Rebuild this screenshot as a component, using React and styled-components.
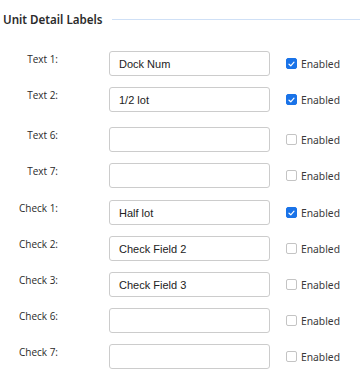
import React, { useState } from "react";
import styled, { createGlobalStyle } from "styled-components";

const GlobalStyle = createGlobalStyle`
  body {
    margin: 0;
    background: #ffffff;
    font-family: "Noto Sans", "Open Sans", sans-serif;
  }
`;

const Panel = styled.div`
  width: 360px;
  padding: 10px 0 0 3px;
  box-sizing: border-box;
`;

const SectionHeader = styled.div`
  display: flex;
  align-items: center;
  gap: 9px;
  height: 18px;
`;

const SectionTitle = styled.h3`
  margin: 0;
  font-size: 11.6px;
  font-weight: 600;
  color: #2b2b2b;
  white-space: nowrap;
`;

const Rule = styled.div`
  flex: 1;
  border-top: 1px solid #cfe0f6;
`;

const Rows = styled.div`
  display: flex;
  flex-direction: column;
  margin-top: 23px;
`;

const Row = styled.div`
  display: flex;
  align-items: center;
  margin-top: ${(p) => p.$space}px;
  &:first-child {
    margin-top: 0;
  }
`;

const FieldLabel = styled.label`
  align-self: flex-start;
  width: 55px;
  flex-shrink: 0;
  padding-top: 1px;
  text-align: right;
  font-family: "Open Sans", "Noto Sans", sans-serif;
  font-size: 10px;
  color: #2a2a2a;
  white-space: nowrap;
`;

const TextInput = styled.input`
  box-sizing: border-box;
  width: 161px;
  height: 25px;
  margin-left: 51px;
  padding: 0 9px;
  border: 1px solid #cccccc;
  border-radius: 3px;
  font-family: "Liberation Sans", Arial, sans-serif;
  font-size: 11px;
  color: #222222;
  background: #ffffff;
  outline: none;
`;

const Toggle = styled.label`
  display: flex;
  align-items: center;
  gap: 4px;
  margin-left: 16px;
  font-family: "Noto Sans", "Open Sans", sans-serif;
  font-size: 10.3px;
  color: #3a3a3a;
  cursor: pointer;
`;

const Box = styled.span`
  box-sizing: border-box;
  width: 11px;
  height: 11px;
  border-radius: 2px;
  border: 1px solid ${(p) => (p.$checked ? "#1a73e8" : "#c4c4c4")};
  background: ${(p) => (p.$checked ? "#1a73e8" : "#ffffff")};
  display: flex;
  align-items: center;
  justify-content: center;
`;

const fields = [
  { label: "Text 1:", value: "Dock Num", enabled: true, space: 0 },
  { label: "Text 2:", value: "1/2 lot", enabled: true, space: 11 },
  { label: "Text 6:", value: "", enabled: false, space: 15 },
  { label: "Text 7:", value: "", enabled: false, space: 11 },
  { label: "Check 1:", value: "Half lot", enabled: true, space: 12 },
  { label: "Check 2:", value: "Check Field 2", enabled: false, space: 11 },
  { label: "Check 3:", value: "Check Field 3", enabled: false, space: 11 },
  { label: "Check 6:", value: "", enabled: false, space: 11 },
  { label: "Check 7:", value: "", enabled: false, space: 11 },
];

const App = () => {
  const [rows, setRows] = useState(fields);

  const update = (i, patch) => {
    setRows(rows.map((r, idx) => (idx === i ? { ...r, ...patch } : r)));
  };

  return (
    <Panel>
      <GlobalStyle />
      <SectionHeader>
        <SectionTitle>Unit Detail Labels</SectionTitle>
        <Rule />
      </SectionHeader>
      <Rows>
        {rows.map((r, i) => (
          <Row key={r.label} $space={r.space}>
            <FieldLabel>{r.label}</FieldLabel>
            <TextInput
              value={r.value}
              onChange={(e) => update(i, { value: e.target.value })}
            />
            <Toggle onClick={() => update(i, { enabled: !r.enabled })}>
              <Box $checked={r.enabled}>
                {r.enabled && (
                  <svg width="7" height="6" viewBox="0 0 7 6">
                    <path
                      d="M1 3.2 L2.8 4.8 L6 1.2"
                      fill="none"
                      stroke="#ffffff"
                      strokeWidth="1.2"
                      strokeLinecap="round"
                      strokeLinejoin="round"
                    />
                  </svg>
                )}
              </Box>
              Enabled
            </Toggle>
          </Row>
        ))}
      </Rows>
    </Panel>
  );
};

export default App;
